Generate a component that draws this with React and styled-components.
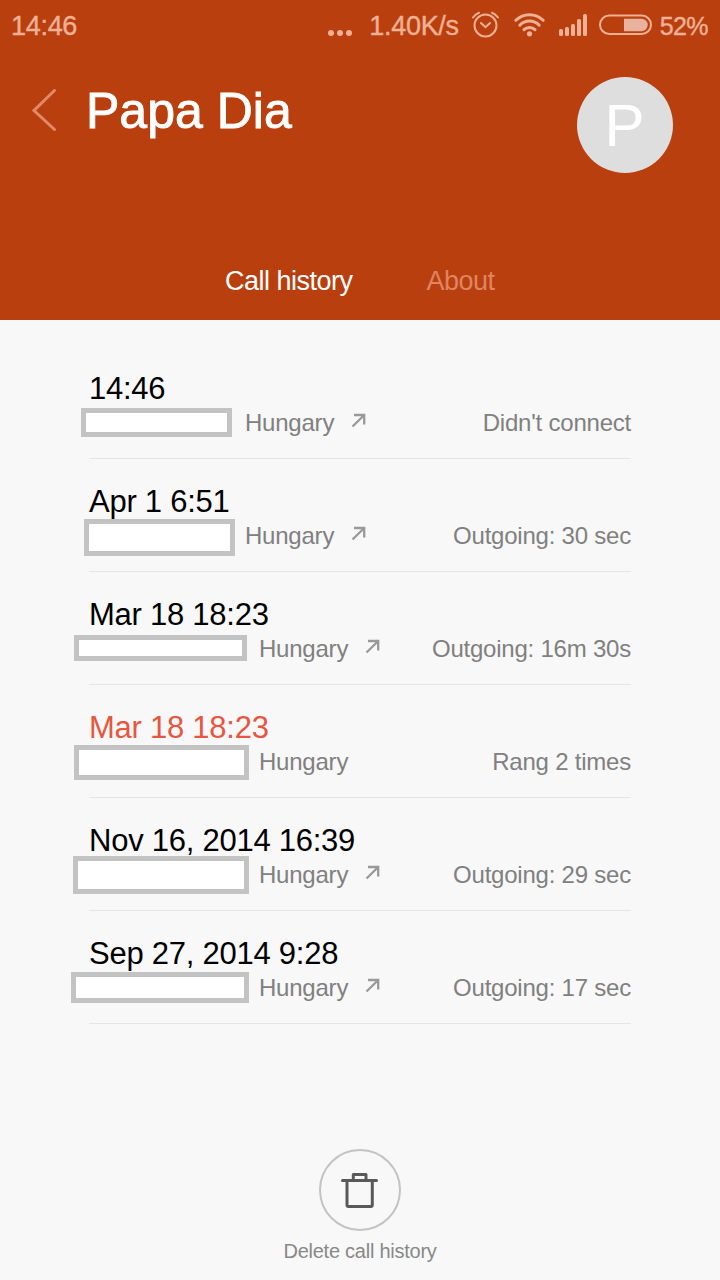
import React, { useState } from "react";
import styled, { createGlobalStyle } from "styled-components";

const calls = [
  { date: "14:46", status: "Didn't connect", slot: 156, outgoing: true, mask: { x: -8, y: 62, w: 151, h: 29 } },
  { date: "Apr 1 6:51", status: "Outgoing: 30 sec", slot: 156, outgoing: true, mask: { x: -5, y: 60, w: 151, h: 37 } },
  { date: "Mar 18 18:23", status: "Outgoing: 16m 30s", slot: 170, outgoing: true, mask: { x: -15, y: 63, w: 173, h: 26 } },
  { date: "Mar 18 18:23", status: "Rang 2 times", slot: 170, missed: true, mask: { x: -15, y: 60, w: 175, h: 35 } },
  { date: "Nov 16, 2014 16:39", status: "Outgoing: 29 sec", slot: 170, outgoing: true, mask: { x: -16, y: 58, w: 176, h: 38 } },
  { date: "Sep 27, 2014 9:28", status: "Outgoing: 17 sec", slot: 170, outgoing: true, mask: { x: -18, y: 61, w: 178, h: 31 } },
];

const tabs = ["Call history", "About"];

// Alarm, wifi, signal and battery, drawn as one strip
const StatusIcons = () => (
  <svg width="182" height="30" viewBox="0 0 182 30" fill="none" stroke="currentColor" strokeLinecap="round">
    {/* Alarm */}
    <circle cx="15.5" cy="16.5" r="11" strokeWidth="2" />
    <path d="M11 14l4.500 4.200L20 14" strokeWidth="2" />
    <path d="M3 8.500Q5.500 5 9 3.800M28 8.500Q25.500 5 22 3.800" strokeWidth="2" />
    {/* Wifi */}
    <path d="M45.800 11.300a19.500 19.500 0 0 1 27.400 0M49.800 16.200a13.500 13.500 0 0 1 19.400 0M54 20.700a8 8 0 0 1 11 0" strokeWidth="3" />
    <circle cx="59.500" cy="24.800" r="2.600" fill="currentColor" stroke="none" />
    {/* Signal */}
    <g fill="currentColor" stroke="none">
      <rect x="89" y="20" width="4" height="7" rx="1.500" />
      <rect x="95" y="18" width="4" height="9" rx="1.500" />
      <rect x="101" y="15" width="4" height="12" rx="1.500" />
      <rect x="107" y="10" width="4" height="17" rx="1.500" />
      <rect x="113" y="5" width="4" height="22" rx="1.500" />
    </g>
    {/* Battery */}
    <rect x="130" y="6.500" width="51" height="18.500" rx="9.250" strokeWidth="2" />
    <path d="M154 9.800h17.500a6.200 6.200 0 0 1 0 12.400H154z" fill="#e8b29f" stroke="none" />
  </svg>
);

const OutgoingIcon = () => (
  <ArrowSvg width="15" height="15" viewBox="0 0 15 15" fill="none" stroke="#999" strokeWidth="2.300">
    <path d="M3 2h10.200v9.500M13 2.200L1.500 13.500" />
  </ArrowSvg>
);

const App = () => {
  const [active, setActive] = useState(0);

  return (
    <>
      <GlobalStyle />
      <Screen>
        <Header>
          <StatusBar>
            <StatusText>14:46</StatusText>
            <StatusRight>
              <Dots>
                <i />
                <i />
                <i />
              </Dots>
              <StatusText>1.40K/s</StatusText>
              <StatusIcons />
              <BatteryText>52%</BatteryText>
            </StatusRight>
          </StatusBar>

          <TitleRow>
            <BackButton aria-label="Back">
              <svg width="28" height="46" viewBox="0 0 28 46" fill="none" stroke="#e08a68" strokeWidth="3" strokeLinecap="round">
                <path d="M23.500 3.500L3 23.500l20.500 19" />
              </svg>
            </BackButton>
            <Name>Papa Dia</Name>
            <Avatar>P</Avatar>
          </TitleRow>

          <Tabs>
            {tabs.map((tab, i) => (
              <Tab key={tab} $active={active === i} onClick={() => setActive(i)}>
                {tab}
              </Tab>
            ))}
          </Tabs>
        </Header>

        <CallList>
          {calls.map((call, i) => (
            <CallRow key={i}>
              <CallDate $missed={call.missed}>{call.date}</CallDate>
              <CallInfo>
                <NumberSlot $width={call.slot} />
                <span>Hungary</span>
                {call.outgoing && <OutgoingIcon />}
                <CallStatus>{call.status}</CallStatus>
              </CallInfo>
              {/* Hidden phone number */}
              <Mask $box={call.mask} />
            </CallRow>
          ))}
        </CallList>

        <Footer>
          <DeleteButton aria-label="Delete">
            <svg width="40" height="38" viewBox="0 0 40 38" fill="none" stroke="#595959" strokeWidth="3" strokeLinecap="round" strokeLinejoin="round">
              <path d="M2.500 9.500h34M13.300 9V3.500h12.700V9M7 10v24a1.500 1.500 0 0 0 1.500 1.500h22.300a1.500 1.500 0 0 0 1.500-1.500V10" />
            </svg>
          </DeleteButton>
          <DeleteLabel>Delete call history</DeleteLabel>
        </Footer>
      </Screen>
    </>
  );
};

const GlobalStyle = createGlobalStyle`
  * {
    box-sizing: border-box;
  }

  body {
    margin: 0;
    background: #f8f8f8;
    font-family: "Liberation Sans", Arial, sans-serif;
  }

  button {
    padding: 0;
    border: none;
    background: none;
    font-family: inherit;
    cursor: pointer;
  }
`;

const Screen = styled.div`
  display: flex;
  flex-direction: column;
  width: 720px;
  height: 1280px;
  overflow: hidden;
`;

const Header = styled.header`
  display: flex;
  flex-direction: column;
  height: 320px;
  background: #b93f0f;
`;

const StatusBar = styled.div`
  display: flex;
  justify-content: space-between;
  height: 50px;
  padding: 9px 12px 0 11px;
  color: #f0b094;
`;

const StatusText = styled.span`
  font-size: 27px;
  line-height: 34px;
  letter-spacing: -0.3px;
  -webkit-text-stroke: 0.4px currentColor;
`;

const StatusRight = styled.div`
  display: flex;

  svg {
    margin-left: 11px;
  }
`;

const Dots = styled.span`
  display: flex;
  gap: 3px;
  margin: 21px 17px 0 0;

  i {
    width: 6px;
    height: 6px;
    border-radius: 50%;
    background: currentColor;
  }
`;

const BatteryText = styled(StatusText)`
  margin-left: 8px;
  font-size: 25px;
  letter-spacing: -0.6px;
`;

const TitleRow = styled.div`
  display: flex;
  align-items: flex-start;
  height: 205px;
  padding: 27px 47px 0 31px;
`;

const BackButton = styled.button`
  width: 28px;
  height: 46px;
  margin-top: 10px;
`;

const Name = styled.h1`
  flex: 1;
  margin: 5px 0 0 27px;
  color: #fff;
  font-size: 50px;
  font-weight: 400;
  line-height: 58px;
  -webkit-text-stroke: 0.9px #fff;
`;

const Avatar = styled.div`
  display: flex;
  align-items: center;
  justify-content: center;
  width: 96px;
  height: 96px;
  padding-right: 1px;
  border-radius: 50%;
  background: #dedede;
  color: #fff;
  font-size: 60px;
`;

const Tabs = styled.nav`
  display: flex;
  gap: 74px;
  padding-left: 225px;
`;

const Tab = styled.button`
  color: ${({ $active }) => ($active ? "#fff" : "#df8560")};
  font-size: 27px;
  line-height: 52px;
  letter-spacing: -0.5px;
`;

const CallList = styled.main`
  flex: 1;
  padding: 26px 89px 0;
`;

const CallRow = styled.div`
  position: relative;
  height: 113px;
  padding-top: 25px;
  border-bottom: 1px solid #e6e6e6;
`;

const CallDate = styled.div`
  color: ${({ $missed }) => ($missed ? "#e85640" : "#000")};
  font-size: 31px;
  line-height: 36px;
  letter-spacing: -0.25px;
`;

const CallInfo = styled.div`
  display: flex;
  color: #808080;
  font-size: 24px;
  line-height: 32px;
  letter-spacing: -0.22px;
`;

const NumberSlot = styled.span`
  width: ${({ $width }) => $width}px;
`;

const ArrowSvg = styled.svg`
  margin: 6px 0 0 17px;
`;

const CallStatus = styled.span`
  margin-left: auto;
`;

const Mask = styled.div`
  position: absolute;
  left: ${({ $box }) => $box.x}px;
  top: ${({ $box }) => $box.y}px;
  width: ${({ $box }) => $box.w}px;
  height: ${({ $box }) => $box.h}px;
  border: 5px solid #c3c3c3;
  background: #fff;
`;

const Footer = styled.footer`
  display: flex;
  flex-direction: column;
  align-items: center;
  height: 132px;
`;

const DeleteButton = styled.button`
  display: flex;
  align-items: center;
  justify-content: center;
  width: 82px;
  height: 82px;
  margin-top: 1px;
  border: 2px solid #c3c3c3;
  border-radius: 50%;
`;

const DeleteLabel = styled.span`
  margin-top: 8px;
  color: #888;
  font-size: 20px;
  line-height: 24px;
  letter-spacing: -0.25px;
`;

export default App;
